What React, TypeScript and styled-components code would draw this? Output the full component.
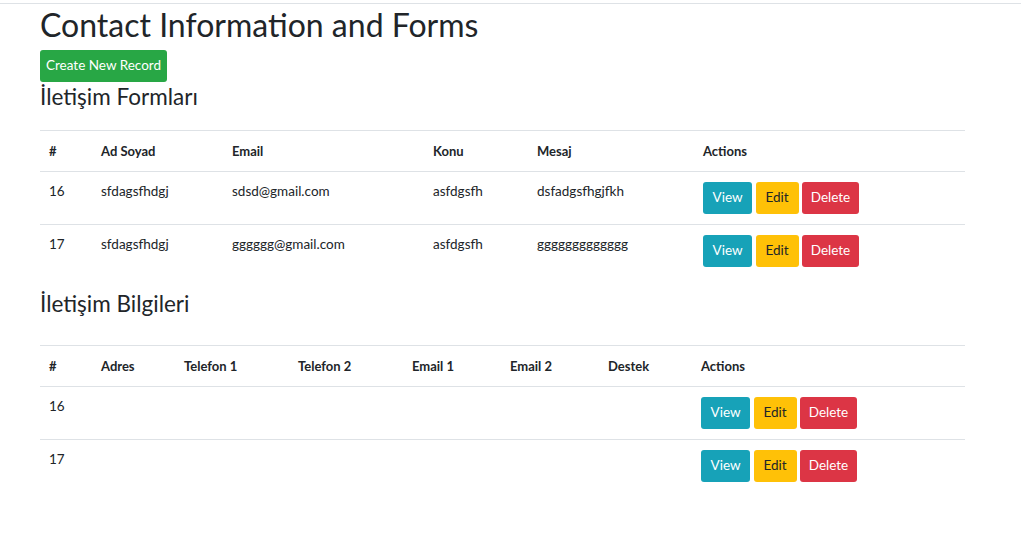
import React from "react";
import styled, { createGlobalStyle } from "styled-components";

const Global = createGlobalStyle`
  html, body { margin: 0; padding: 0; background: #fff; }
  body {
    font-family: Lato, "Liberation Sans", sans-serif;
    color: #212529;
    font-size: 14px;
  }
`;

const TopRule = styled.div`
  height: 3px;
  border-bottom: 1px solid #dee2e6;
`;

const Page = styled.div`
  padding: 0 56px 40px 40px;
`;

const Title = styled.h1`
  margin: 2px 0 6px;
  font-size: 32px;
  font-weight: 400;
  line-height: 38px;
`;

const SectionTitle = styled.h2<{ $top: number; $bottom: number }>`
  margin: ${(p) => p.$top}px 0 ${(p) => p.$bottom}px;
  font-size: 22.5px;
  font-weight: 400;
  line-height: 28px;
`;

const Btn = styled.button<{ $bg: string; $fg: string; $px?: number }>`
  display: inline-flex;
  align-items: center;
  justify-content: center;
  height: 32px;
  padding: 0 ${(p) => p.$px ?? 9}px;
  border: none;
  border-radius: 3px;
  background: ${(p) => p.$bg};
  color: ${(p) => p.$fg};
  font-family: inherit;
  font-size: 13.5px;
  line-height: 1;
  cursor: pointer;
`;

const BtnGroup = styled.div`
  display: flex;
  gap: 3.5px;
`;

const Table = styled.table`
  width: 925px;
  border-collapse: collapse;
`;

const Th = styled.th`
  text-align: left;
  font-weight: 700;
  font-size: 13px;
  padding: 11px 9px;
  line-height: 18px;
  border-top: 1px solid #dee2e6;
  border-bottom: 1px solid #dee2e6;
`;

const Td = styled.td`
  vertical-align: top;
  padding: 10px 9px;
  line-height: 18px;
  font-size: 13.5px;
`;

const Tr = styled.tr`
  & + & td { border-top: 1px solid #dee2e6; }
`;

const Actions = () => (
  <BtnGroup>
    <Btn $bg="#17a2b8" $fg="#fff" $px={9.5}>View</Btn>
    <Btn $bg="#ffc107" $fg="#212529" $px={10}>Edit</Btn>
    <Btn $bg="#dc3545" $fg="#fff" $px={8.5}>Delete</Btn>
  </BtnGroup>
);

const forms = [
  { id: 16, name: "sfdagsfhdgj", email: "sdsd@gmail.com", konu: "asfdgsfh", mesaj: "dsfadgsfhgjfkh" },
  { id: 17, name: "sfdagsfhdgj", email: "gggggg@gmail.com", konu: "asfdgsfh", mesaj: "ggggggggggggg" },
];

const formCols = [52, 131, 201, 104, 166, 271];
const infoCols = [52, 83, 114, 114, 98, 98, 93, 273];

export default function App() {
  return (
    <>
      <Global />
      <TopRule />
      <Page>
        <Title>Contact Information and Forms</Title>
        <Btn $bg="#28a745" $fg="#fff" $px={6}>Create New Record</Btn>
        <SectionTitle $top={1} $bottom={19}>İletişim Formları</SectionTitle>
        <Table>
          <colgroup>
            {formCols.map((w, i) => (
              <col key={i} style={{ width: w }} />
            ))}
          </colgroup>
          <thead>
            <tr>
              <Th>#</Th>
              <Th>Ad Soyad</Th>
              <Th>Email</Th>
              <Th>Konu</Th>
              <Th>Mesaj</Th>
              <Th>Actions</Th>
            </tr>
          </thead>
          <tbody>
            {forms.map((f) => (
              <Tr key={f.id}>
                <Td>{f.id}</Td>
                <Td>{f.name}</Td>
                <Td>{f.email}</Td>
                <Td>{f.konu}</Td>
                <Td>{f.mesaj}</Td>
                <Td>
                  <Actions />
                </Td>
              </Tr>
            ))}
          </tbody>
        </Table>
        <SectionTitle $top={13} $bottom={27}>İletişim Bilgileri</SectionTitle>
        <Table>
          <colgroup>
            {infoCols.map((w, i) => (
              <col key={i} style={{ width: w }} />
            ))}
          </colgroup>
          <thead>
            <tr>
              <Th>#</Th>
              <Th>Adres</Th>
              <Th>Telefon 1</Th>
              <Th>Telefon 2</Th>
              <Th>Email 1</Th>
              <Th>Email 2</Th>
              <Th>Destek</Th>
              <Th>Actions</Th>
            </tr>
          </thead>
          <tbody>
            {[16, 17].map((id) => (
              <Tr key={id}>
                <Td>{id}</Td>
                <Td />
                <Td />
                <Td />
                <Td />
                <Td />
                <Td />
                <Td>
                  <Actions />
                </Td>
              </Tr>
            ))}
          </tbody>
        </Table>
      </Page>
    </>
  );
}
